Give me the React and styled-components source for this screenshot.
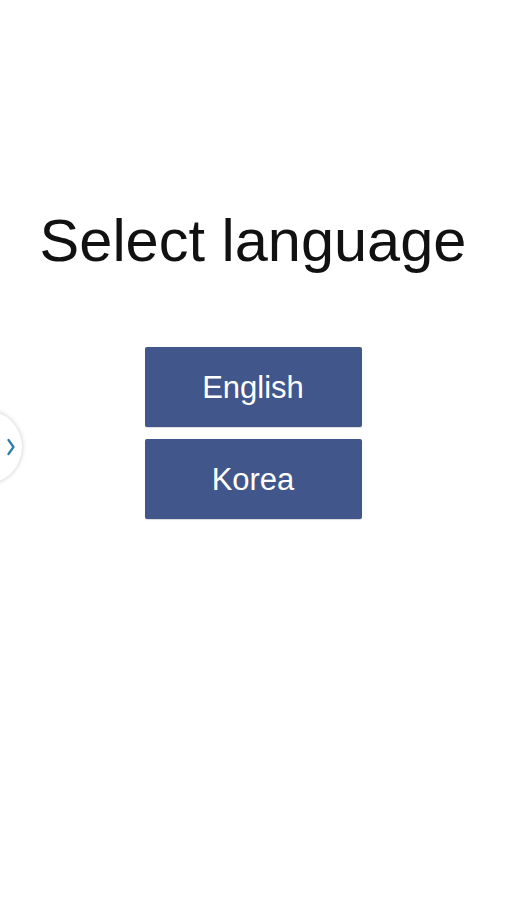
import React from "react";
import styled, { createGlobalStyle } from "styled-components";

const Global = createGlobalStyle`
  html, body { margin: 0; padding: 0; background: #ffffff; }
  body { font-family: "Liberation Sans", Arial, sans-serif; }
`;

const Page = styled.div`
  position: relative;
  width: 506px;
  height: 900px;
  overflow: hidden;
  background: #ffffff;
  display: flex;
  flex-direction: column;
  align-items: center;
`;

const Title = styled.h1`
  margin: 206px 0 0 0;
  font-family: "Liberation Sans", Arial, sans-serif;
  font-weight: 400;
  font-size: 59.5px;
  line-height: 70px;
  color: #111111;
  letter-spacing: 0;
`;

const ButtonList = styled.div`
  margin-top: 71px;
  display: flex;
  flex-direction: column;
  gap: 12px;
`;

const LangButton = styled.button`
  width: 217px;
  height: 80px;
  border: none;
  border-radius: 2px;
  background: #41568a;
  color: #ffffff;
  font-family: "Liberation Sans", Arial, sans-serif;
  font-size: 31px;
  padding: 2px 0 0 0;
  box-shadow: 0 1px 1px rgba(0, 0, 0, 0.15);
  cursor: pointer;
`;

const SideTab = styled.div`
  position: absolute;
  left: -52px;
  top: 410px;
  width: 74px;
  height: 74px;
  border-radius: 50%;
  background: #ffffff;
  box-shadow: 0 0 5px rgba(0, 0, 0, 0.22);
  display: flex;
  align-items: center;
  justify-content: flex-end;
  padding-right: 7px;
  box-sizing: border-box;
`;

export default function App() {
  return (
    <>
      <Global />
      <Page>
        <Title>Select language</Title>
        <ButtonList>
          <LangButton>English</LangButton>
          <LangButton>Korea</LangButton>
        </ButtonList>
        <SideTab>
          <svg width="8" height="18" viewBox="0 0 8 18">
            <path d="M1.5 2 L6.5 9 L1.5 16" fill="none" stroke="#2b7ea6" strokeWidth="2.2" strokeLinecap="round" strokeLinejoin="round" />
          </svg>
        </SideTab>
      </Page>
    </>
  );
}
